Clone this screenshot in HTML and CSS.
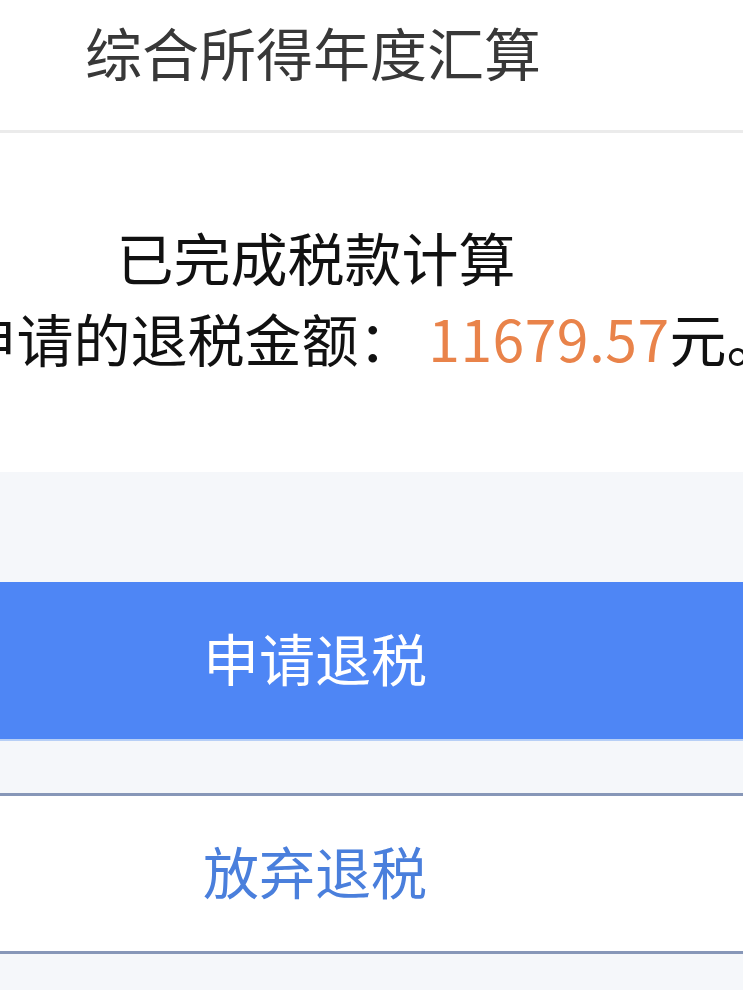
FILE: index.html
```html
<!DOCTYPE html>
<html lang="zh-CN">
<head>
<meta charset="utf-8">
<title>综合所得年度汇算</title>
<link rel="stylesheet" href="styles.css">
</head>
<body>
<div class="page">
  <header class="header">
    <h1 class="title">综合所得年度汇算</h1>
  </header>
  <section class="result">
    <p class="line line-main">已完成税款计算</p>
    <p class="line line-amount"><span>申请的退税金额：</span><span class="space"> </span><span class="amount">11679.57</span><span>元。</span></p>
  </section>
  <section class="actions">
    <div class="btn btn-primary">申请退税</div>
    <div class="btn btn-secondary">放弃退税</div>
  </section>
</div>
</body>
</html>
```

FILE: styles.css
```css
html, body {
  margin: 0;
  padding: 0;
  background: #f5f7fa;
}
body {
  font-family: "Noto Sans CJK SC", "Noto Sans", sans-serif;
  color: #111;
}
.page {
  width: 743px;
  min-height: 990px;
  overflow: hidden;
  background: #f5f7fa;
}
.header {
  background: #fff;
  height: 109px;
  padding: 21px 0 0 85px;
  border-bottom: 3px solid #ebebeb;
}
.title {
  margin: 0;
  font-size: 57px;
  line-height: 60px;
  font-weight: 400;
  color: #383838;
  white-space: nowrap;
}
.result {
  background: #fff;
  padding: 95px 0 106px;
}
.line {
  margin: 0;
  font-size: 57px;
  line-height: 57px;
  white-space: nowrap;
}
.line-main {
  text-align: center;
  padding-right: 111px;
}
.line-amount {
  margin-top: 24px;
  display: flex;
  justify-content: center;
}
.space {
  white-space: pre;
}
.amount {
  color: #e9834a;
  letter-spacing: 0.5px;
}
.actions {
  padding-top: 110px;
}
.btn {
  display: flex;
  align-items: center;
  justify-content: center;
  padding-right: 113px;
  font-size: 56px;
  line-height: 60px;
}
.btn-primary {
  height: 149px;
  padding-bottom: 8px;
  background: #4e86f5;
  color: #fff;
  border-bottom: 2px solid #b7cff6;
}
.btn-secondary {
  margin-top: 52px;
  height: 147px;
  padding-bottom: 8px;
  background: #fff;
  color: #4a7fdc;
  border-top: 3px solid #8797b8;
  border-bottom: 3px solid #8797b8;
}
```
